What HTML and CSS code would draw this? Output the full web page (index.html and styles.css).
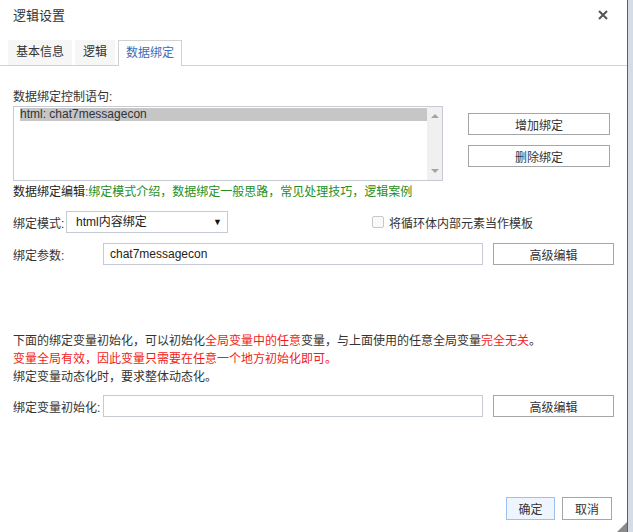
FILE: index.html
```html
<!DOCTYPE html>
<html lang="zh-CN">
<head>
    <meta charset="UTF-8">
    <title>逻辑设置</title>
    <link rel="stylesheet" href="styles.css">
</head>
<body>

<div class="dialog">
    <div class="dialog-header">
        <span class="dialog-title">逻辑设置</span>
        <span class="dialog-close">
            <svg width="10" height="10" viewBox="0 0 10 10"><path d="M1 1L9 9M9 1L1 9" stroke="#555" stroke-width="2"/></svg>
        </span>
    </div>

    <ul class="tabs">
        <li class="tab">基本信息</li>
        <li class="tab">逻辑</li>
        <li class="tab active">数据绑定</li>
    </ul>

    <div class="tab-body">
        <div class="field-title">数据绑定控制语句:</div>
        <div class="list-row">
            <div class="listbox">
                <div class="list-items">
                    <div class="list-item selected">html: chat7messagecon</div>
                </div>
                <div class="scrollbar">
                    <span class="arrow-up"></span>
                    <span class="arrow-down"></span>
                </div>
            </div>
            <div class="list-buttons">
                <button class="btn">增加绑定</button>
                <button class="btn">删除绑定</button>
            </div>
        </div>

        <div class="edit-links">数据绑定编辑<span class="green">:绑定模式介绍，数据绑定一般思路，常见处理技巧，逻辑案例</span></div>

        <div class="form-row">
            <span class="label-short">绑定模式:</span>
            <div class="select">html内容绑定<span class="select-arrow">▼</span></div>
            <label class="check">
                <span class="checkbox"></span>
                将循环体内部元素当作模板
            </label>
        </div>

        <div class="form-row gap-row">
            <span class="label">绑定参数:</span>
            <div class="input">chat7messagecon</div>
            <button class="btn btn-wide">高级编辑</button>
        </div>

        <div class="notes">
            <p>下面的绑定变量初始化，可以初始化<span class="red">全局变量中的任意</span>变量，与上面使用的任意全局变量<span class="red">完全无关</span>。</p>
            <p class="red">变量全局有效，因此变量只需要在任意一个地方初始化即可。</p>
            <p>绑定变量动态化时，要求整体动态化。</p>
        </div>

        <div class="form-row init-row">
            <span class="label">绑定变量初始化:</span>
            <div class="input"></div>
            <button class="btn btn-wide">高级编辑</button>
        </div>
    </div>

    <div class="dialog-footer">
        <button class="btn btn-ok">确定</button>
        <button class="btn btn-cancel">取消</button>
    </div>
    <span class="resize-grip"></span>
</div>

</body>
</html>
```

FILE: styles.css
```css
* {
    box-sizing: border-box;
}

body {
    margin: 0;
    background-color: #d5dce7;
    font-family: "Liberation Sans", "Noto Sans CJK SC", sans-serif;
    font-size: 12px;
    color: #333;
}

.dialog {
    position: relative;
    width: 628px;
    height: 532px;
    background-color: #ffffff;
    border-right: 1px solid #3a62b4; /* 右侧蓝色边框 */
    display: flex;
    flex-direction: column;
}

.dialog-header {
    height: 40px;
    display: flex;
    justify-content: space-between;
    padding: 0 13px 0 13px;
}

.dialog-title {
    font-size: 13px;
    line-height: 32px;
    color: #333;
}

.dialog-close {
    padding-top: 9px;
    padding-right: 6px;
}

/* 标签页 */
.tabs {
    list-style: none;
    margin: 0;
    padding: 0 0 0 8px;
    display: flex;
    gap: 3px;
    height: 26px;
    border-bottom: 1px solid #d2d2d2;
}

.tab {
    height: 25px;
    line-height: 25px;
    padding: 0 8px;
    background-color: #f6f6f6;
    color: #333;
}

.tab.active {
    height: 26px;
    padding: 0 7px;
    background-color: #ffffff;
    border: 1px solid #d2d2d2;
    border-bottom: none;
    color: #3d6db3;
}

.tab-body {
    padding: 23px 13px 0 13px;
}

.field-title {
    line-height: 16px;
    margin-bottom: 1px;
}

.list-row {
    display: flex;
    gap: 25px;
}

.listbox {
    width: 430px;
    height: 75px;
    border: 1px solid #c6cbd3;
    display: flex;
}

.list-items {
    flex: 1;
    padding: 1px 0 0 6px;
}

.list-item {
    line-height: 13px;
    height: 13px;
    color: #333;
}

.list-item.selected {
    background-color: #c6c6c6;
}

.scrollbar {
    width: 15px;
    background-color: #f0f0f0;
    display: flex;
    flex-direction: column;
    justify-content: space-between;
    align-items: center;
    padding: 7px 0 7px 0;
}

.arrow-up {
    width: 0;
    height: 0;
    border-left: 4px solid transparent;
    border-right: 4px solid transparent;
    border-bottom: 4px solid #a3a3a3;
}

.arrow-down {
    width: 0;
    height: 0;
    border-left: 4px solid transparent;
    border-right: 4px solid transparent;
    border-top: 4px solid #a3a3a3;
}

.list-buttons {
    display: flex;
    flex-direction: column;
    gap: 10px;
    padding-top: 7px;
}

.btn {
    font-family: "Liberation Sans", "Noto Sans CJK SC", sans-serif;
    font-size: 12px;
    color: #333;
    background-color: #ffffff;
    border: 1px solid #a6a6a6;
    height: 22px;
    width: 142px;
    padding: 0;
    margin: 0;
}

.edit-links {
    margin-top: 3px;
    line-height: 16px;
    color: #222;
}

.green {
    color: #239023;
}

.red {
    color: #f31b1b;
}

.form-row {
    display: flex;
    align-items: center;
    height: 22px;
    margin-top: 11px;
}

.gap-row {
    margin-top: 10px;
}

.label-short {
    width: 53px;
}

.label {
    width: 90px;
}

.select {
    position: relative;
    width: 162px;
    height: 22px;
    border: 1px solid #c6cbd3;
    line-height: 20px;
    padding-left: 9px;
    color: #222;
}

.select-arrow {
    position: absolute;
    right: 5px;
    top: 0;
    font-size: 9px;
    color: #111;
}

.check {
    display: flex;
    align-items: center;
    gap: 5px;
    margin-left: 144px;
    color: #333;
}

.checkbox {
    width: 12px;
    height: 12px;
    border: 1px solid #c8c8c8;
    border-radius: 2px;
    background-color: #f9f9f9;
}

.input {
    width: 380px;
    height: 22px;
    border: 1px solid #c6cbd3;
    line-height: 20px;
    padding-left: 6px;
    color: #222;
}

.btn-wide {
    width: 121px;
    margin-left: 10px;
}

.notes {
    margin-top: 67px;
}

.notes p {
    margin: 0;
    line-height: 18px;
}

.init-row {
    margin-top: 9px;
}

/* 底部按钮 */
.dialog-footer {
    margin-top: auto;
    display: flex;
    justify-content: flex-end;
    gap: 7px;
    padding: 0 15px 12px 0;
}

.btn-ok {
    width: 49px;
    height: 23px;
    border-color: #9bc1f3;
    background-color: #eef5ff;
}

.btn-cancel {
    width: 50px;
    height: 23px;
}

.resize-grip {
    position: absolute;
    right: 0;
    bottom: 0;
    width: 0;
    height: 0;
    border-left: 10px solid transparent;
    border-bottom: 10px solid #8a8a8a;
}
```
